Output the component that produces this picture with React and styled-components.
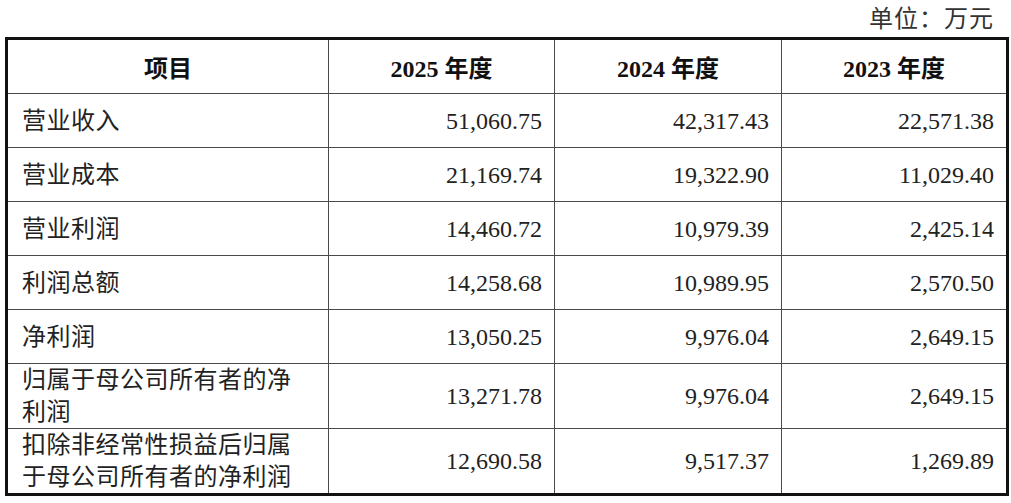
import React from "react";
import styled, { createGlobalStyle } from "styled-components";

const GlobalStyle = createGlobalStyle`
  html, body {
    margin: 0;
    padding: 0;
    background: #fff;
  }
  body {
    font-family: "Liberation Serif", "Noto Sans CJK SC", serif;
    color: #222;
  }
`;

const Page = styled.div`
  width: 1011px;
  height: 503px;
  overflow: hidden;
`;

const Unit = styled.div`
  height: 37px;
  box-sizing: border-box;
  padding: 3px 17px 0 0;
  text-align: right;
  font-size: 24px;
  letter-spacing: 1px;
  line-height: 32px;
  color: #333;
`;

const Table = styled.table`
  margin-left: 5px;
  width: 1001px;
  border-collapse: collapse;
  table-layout: fixed;
  border: 3px solid #111;
`;

const Th = styled.th`
  height: 53px;
  padding: 0;
  border: 1px solid #4a4a4a;
  font-size: 24px;
  font-weight: bold;
  color: #111;
  text-align: center;
  vertical-align: middle;
`;

const Td = styled.td`
  height: ${(p) => (p.$tall ? "64px" : "53px")};
  padding: ${(p) => (p.$num ? "0 12px 0 8px" : "0 30px 0 14px")};
  border: 1px solid #4a4a4a;
  font-size: 24px;
  line-height: 32px;
  letter-spacing: ${(p) => (p.$num ? "0" : "0.5px")};
  text-align: ${(p) => (p.$num ? "right" : "left")};
  vertical-align: middle;
  color: #222;
`;

const rows = [
  ["营业收入", "51,060.75", "42,317.43", "22,571.38"],
  ["营业成本", "21,169.74", "19,322.90", "11,029.40"],
  ["营业利润", "14,460.72", "10,979.39", "2,425.14"],
  ["利润总额", "14,258.68", "10,989.95", "2,570.50"],
  ["净利润", "13,050.25", "9,976.04", "2,649.15"],
  ["归属于母公司所有者的净利润", "13,271.78", "9,976.04", "2,649.15", true],
  ["扣除非经常性损益后归属于母公司所有者的净利润", "12,690.58", "9,517.37", "1,269.89", true],
];

export default function App() {
  return (
    <Page>
      <GlobalStyle />
      <Unit>单位：万元</Unit>
      <Table>
        <colgroup>
          <col style={{ width: 322 }} />
          <col style={{ width: 226 }} />
          <col style={{ width: 227 }} />
          <col style={{ width: 226 }} />
        </colgroup>
        <thead>
          <tr>
            <Th>项目</Th>
            <Th>2025 年度</Th>
            <Th>2024 年度</Th>
            <Th>2023 年度</Th>
          </tr>
        </thead>
        <tbody>
          {rows.map(([name, a, b, c, tall]) => (
            <tr key={name}>
              <Td $tall={tall}>{name}</Td>
              <Td $num $tall={tall}>{a}</Td>
              <Td $num $tall={tall}>{b}</Td>
              <Td $num $tall={tall}>{c}</Td>
            </tr>
          ))}
        </tbody>
      </Table>
    </Page>
  );
}
